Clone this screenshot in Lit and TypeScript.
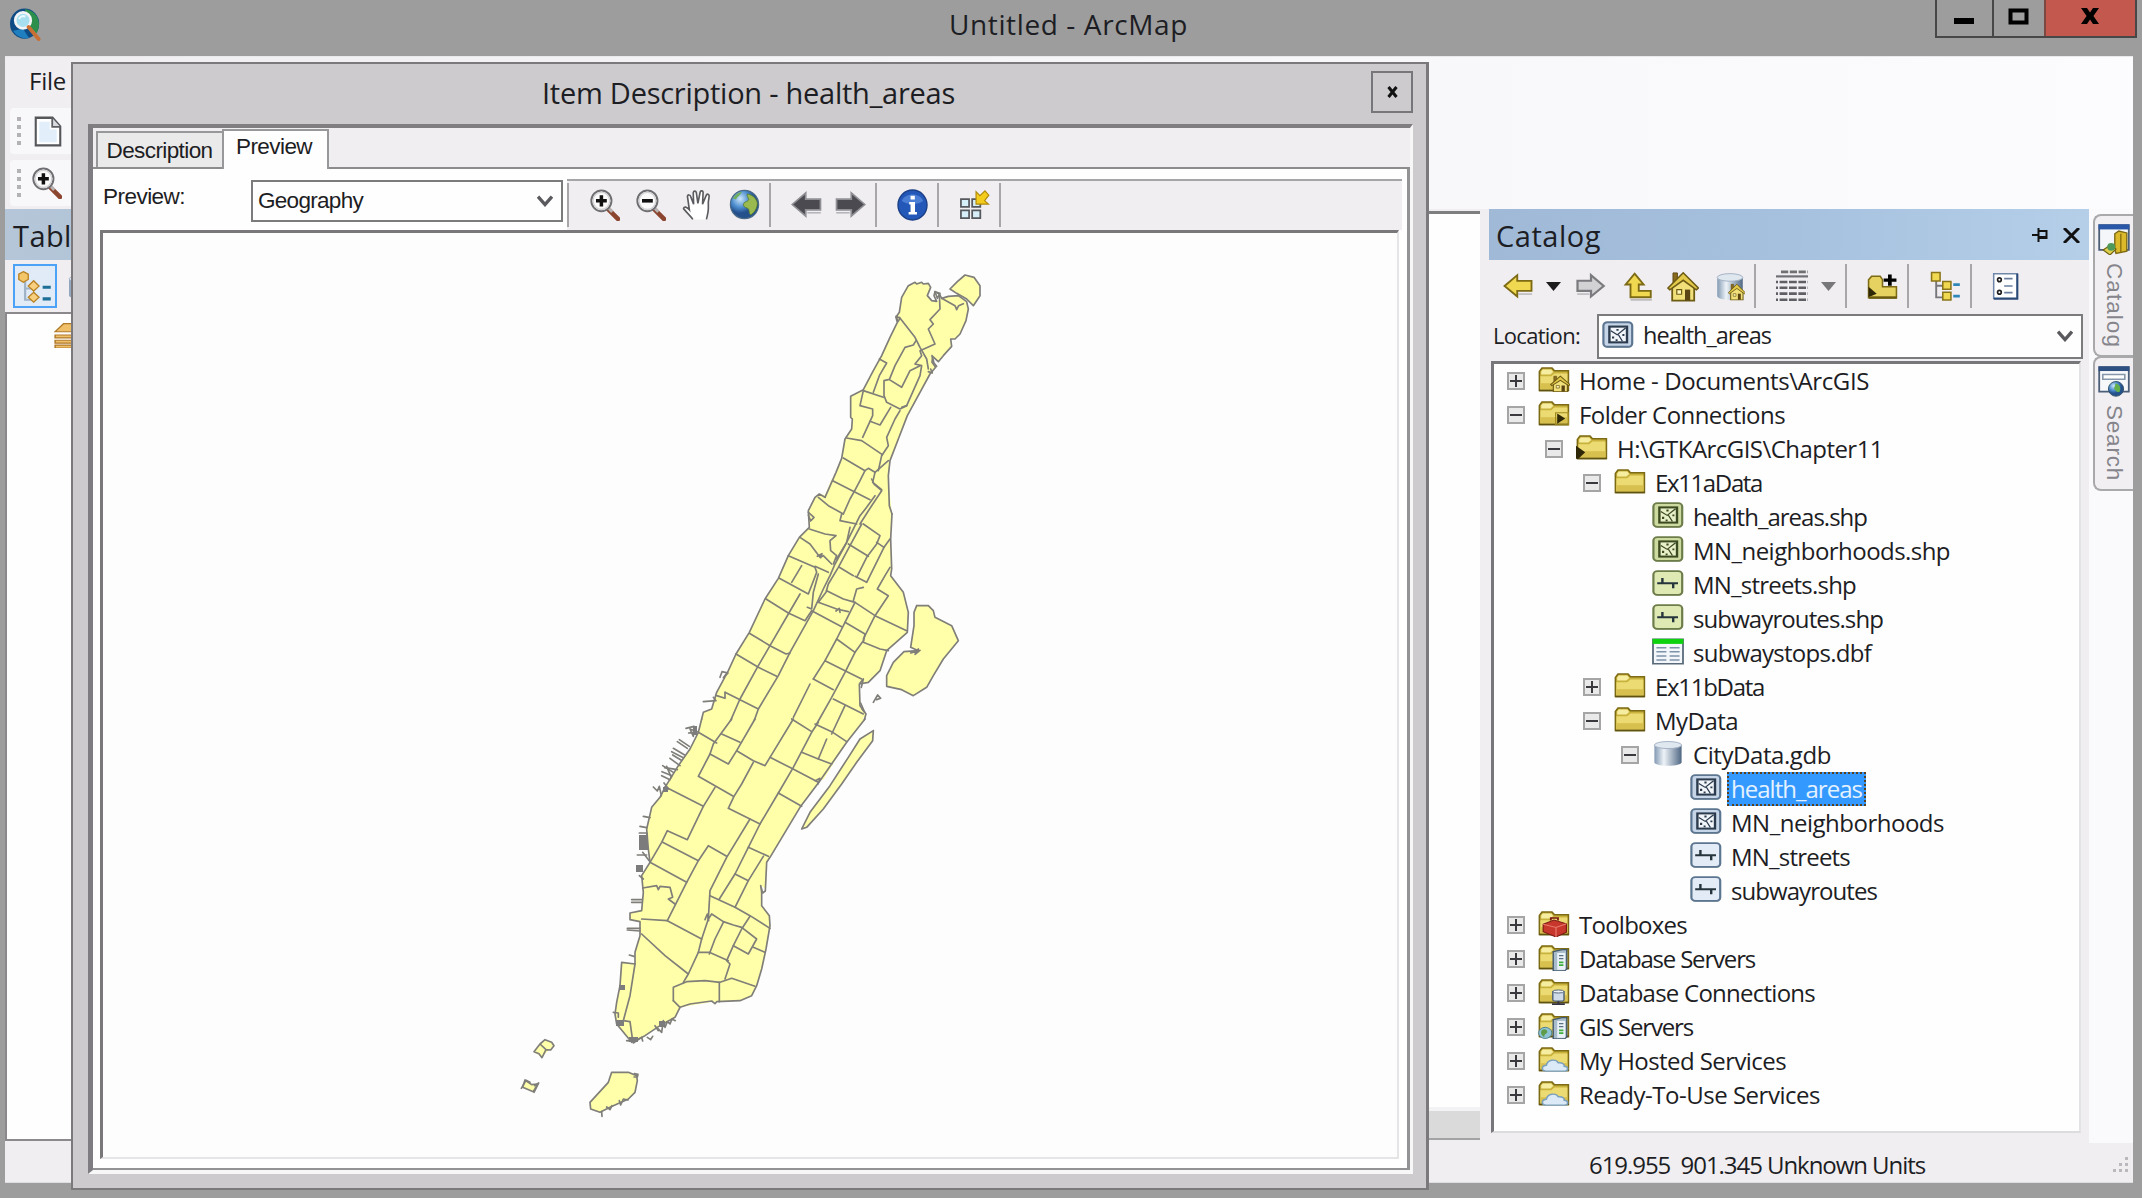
import { LitElement, html, svg, css, nothing, type TemplateResult } from "lit";
import { customElement, property } from "lit/decorators.js";

const UI_FONT = '"Open Sans", "Noto Sans", sans-serif';
const CLASSIC_FONT = '"Liberation Sans", sans-serif';

const pen = document.createElement("canvas").getContext("2d")!;

/* Text that is tracked so that it occupies a known width. */
@customElement("fit-label")
class FitLabel extends LitElement {
  @property() text = "";
  @property({ type: Number }) width = 0;
  @property({ type: Number }) size = 24;
  @property({ type: Boolean }) classic = false;

  static styles = css`
    :host { display: inline-block; white-space: pre; flex: none; line-height: 1; }
    .t { display: block; line-height: 1.36; }
  `;

  render() {
    const family = this.classic ? CLASSIC_FONT : UI_FONT;
    pen.font = `${this.size}px ${family}`;
    const natural = pen.measureText(this.text).width;
    const tracking = this.width ? (this.width - natural) / this.text.length : 0;
    return html`<span class="t" style="font-family:${family};font-size:${this.size}px;letter-spacing:${tracking.toFixed(3)}px">${this.text}</span>`;
  }
}

const label = (text: string, width: number, size = 24, classic = false) =>
  html`<fit-label .text=${text} .width=${width} .size=${size} .classic=${classic}></fit-label>`;

/* ---------- icons, all on a 16 x 16 grid ---------- */

const folder = svg`
  <path d="M.7 14.5V3.2L2 1.2h5l1.2 1.6h7V14.5z" fill="#c9b23c" stroke="#7d6a14" stroke-width=".8"/>
  <path d="M1.6 3.3 2.4 2h4.2l1 1.5-1.4 1.6H1.6z" fill="#f6eda0"/>
  <path d="M1.2 6h5.4l1.6-1.6h6.5v9.6H1.2z" fill="#ecdb72"/>
  <path d="M1.2 10.2h13.5V14H1.2z" fill="#d8c04e"/>
  <path d="M.6 14.5h14.8" stroke="#5f5110" stroke-width="1"/>`;

const server = svg`
  <path d="M7 4.2 11.5 3h2.3v11.5L12.7 15.6H7z" fill="#a9bccb" stroke="#42586b" stroke-width=".7"/>
  <path d="M9 5h4v10H9z" fill="#eaf1f7"/>
  <path d="M9.9 6.6h2.2M9.9 8.4h2.2" stroke="#5a6f82" stroke-width=".8"/>
  <path d="M9.9 10.6h2.2M9.9 12.2h2.2" stroke="#3fae3f" stroke-width="1"/>`;

const house = svg`
  <path d="M2.6 7.6V15.3h11V7.6L8.2 2z" fill="#f1e07a" stroke="#6d5b14" stroke-width=".9"/>
  <path d="M3 1h2.2v4L3 6.8z" fill="#8a6a1c" stroke="#5d4a10" stroke-width=".5"/>
  <path d="M.5 8.8 8.1.9l7.6 7.9-1 .9-6.6-4.9-6.7 4.9z" fill="#e3c94a" stroke="#6d5b14" stroke-width=".8"/>
  <path d="M4.9 9.6h2.4V12H4.9z" fill="#fff6bc" stroke="#6d5b14" stroke-width=".6"/>
  <path d="M9 9.6h2.6v5.6H9z" fill="#5b4413"/>`;

const cylinder = svg`
  <path d="M1.2 3v10.2c0 1.2 3 2.1 6.8 2.1s6.8-.9 6.8-2.1V3z" fill="url(#steel)"/>
  <ellipse cx="8" cy="3" rx="6.8" ry="2.1" fill="#dfe7ef" stroke="#9fb0c2" stroke-width=".5"/>`;

const lens = (sign: TemplateResult) => svg`
  <path d="M9.6 9.8 15 15" stroke="#8c4630" stroke-width="2.3" stroke-linecap="round"/>
  <path d="M10.2 9.6 12 11.4" stroke="#b9b3b3" stroke-width="1.6"/>
  <circle cx="6.4" cy="5.9" r="5.2" fill="#fafafa" stroke="#6f6f73" stroke-width="1"/>
  <circle cx="6.4" cy="5.9" r="4.3" fill="none" stroke="#d3d3d6" stroke-width=".7"/>${sign}`;

const tile = (edge: string, fill: string, mark: TemplateResult) => svg`
  <rect x=".8" y="1.4" width="14.6" height="14" rx="2.2" fill="#8a8f88" opacity=".55"/>
  <rect x=".7" y=".7" width="14.4" height="14" rx="2" fill=${fill} stroke=${edge} stroke-width="1.1"/>${mark}`;

const areaMark = (ink: string, paper: string) => svg`
  <rect x="3.7" y="3.2" width="8.8" height="9" fill=${paper} stroke=${ink} stroke-width="1.2"/>
  <path d="M4.4 5.600 7.600 7.900 11.800 4M8.200 7.800 10.200 11.600" fill="none" stroke=${ink} stroke-width=".65"/>
  <path d="M7.200 4.500h1.100v1.100H7.200zM5 8.800h1.100v1.200H5zM10.200 7.400h1v1.100h-1zM6.800 10.400h1v1h-1z" fill=${ink}/>`;

const lineMark = svg`<path d="M2.6 7.8H13M5.2 4.8v3M10.6 7.8v3" stroke="#26343c" stroke-width="1.2" fill="none"/>`;

const cloud = svg`<path d="M4 14.9C1.5 14.7 1.600 11.600 4.200 11.400 4.600 8.200 8.800 7.200 10.200 10c2.200-.3 3.100 1 2.900 2 2.400.3 2.200 2.800.2 2.900z" fill="#dbeaf6" stroke="#7c9fbc" stroke-width=".8"/>`;

const treeGlyph = svg`
  <path d="M3.200 4v9.600h6M3.200 7.600h6" fill="none" stroke="#77777b" stroke-width="1"/>
  <path d="M.8.8h4.4v4.4H.8zM6.6 5.4h4.2v4H6.600zM6.600 11h4.200v4H6.600z" fill="#f0d850" stroke="#8a741a" stroke-width=".8"/>
  <path d="M12 7h3.400M12 13h3.400" stroke="#2e86b8" stroke-width="1.400"/>`;

const ICONS: Record<string, TemplateResult> = {
  arcmap: svg`
    <circle cx="7.8" cy="7.6" r="7.3" fill="#0f4c86"/>
    <path d="M8 .6C12 1 15 4 15 8c0 2-1 4.4-2.6 5.6L9.5 9z" fill="#2c8f4c"/>
    <path d="M2 11c2 3 5 4 8 3.6L7 10z" fill="#1f7fbf"/>
    <circle cx="7" cy="6" r="3.9" fill="#a8dff0" stroke="#f2f4f5" stroke-width="1.3"/>
    <path d="M5 5.4C5.6 4 7 3.6 8.2 4.2" stroke="#e9fbff" stroke-width="1" fill="none"/>
    <path d="M9.8 9.2 14.8 15" stroke="#c96f34" stroke-width="1.9" stroke-linecap="round"/>`,
  page: svg`<path d="M1 .9h9.6L15 5.4v9.8H1z" fill="#fff" stroke="#55575b" stroke-width="1.2"/>
    <path d="M3 3h6v4h4v6.5H3z" fill="#e2effa"/><path d="M10.4 1v4.6H15" fill="#d8dade" stroke="#5d5f63" stroke-width="1"/>`,
  zoomIn: lens(svg`<path d="M3.6 5.9h5.6M6.4 3.1v5.6" stroke="#111" stroke-width="1.8"/>`),
  zoomOut: lens(svg`<path d="M3.6 5.9h5.6" stroke="#111" stroke-width="1.8"/>`),
  hand: svg`<path d="M5.600 15.200C4.600 13.600 2.600 12 .8 9.800c.2-1.200 1.600-1 3 .6L2.800 3.600c.2-.9 1.400-.8 1.700.2L6 7.600 5.800 1.800c.2-1 1.400-1 1.600 0l.8 5.400L9.400 1.400c.4-.8 1.500-.6 1.500.4L10.600 7.600l2-4.600c.6-.8 1.600-.2 1.400.8-.6 2.400-.6 3.800-.4 6 0 2-.6 3.600-1 5.400" fill="#fff" stroke="#5c5c60" stroke-width=".85"/>`,
  globe: svg`<circle cx="8" cy="8" r="7.300" fill="url(#sea)" stroke="#4a6a86" stroke-width=".6"/>
    <path d="M9.400 2.600c2 .2 4.400 1.600 5.200 4.400.2 3-1.800 5.400-3.400 6.400-1.200-1-.4-2.400-1.400-3.400-1.400-.4-2.800-1-2.200-2.600.8-1 2.200-.8 2.600-2C10 4.400 9 3.600 9.400 2.600z" fill="#9ab94e" stroke="#55792a" stroke-width=".4"/>
    <path d="M2 4.800C3.400 2.800 5 1.600 6.600 1.400 6 3.200 4.400 3.600 3.600 5.400z" fill="#6fae5a"/>`,
  prev: svg`<path d="M.6 8 7.600 1.600V5h7.600v6H7.600v3.400z" fill="#4a4a50" stroke="#8f8f94" stroke-width=".9"/><path d="M8.400 12.600h7" stroke="#a9a9ae" stroke-width=".7"/>`,
  next: svg`<path d="M15.400 8 8.400 1.600V5H.8v6h7.600v3.400z" fill="#4a4a50" stroke="#8f8f94" stroke-width=".9"/><path d="M.6 12.600h7" stroke="#a9a9ae" stroke-width=".7"/>`,
  info: svg`<circle cx="8" cy="8" r="7.500" fill="#2458b8" stroke="#1b3f86" stroke-width=".7"/><path d="M2.500 6C4 1.600 12 1.600 13.500 6 11 8 5 8 2.500 6z" fill="#5b8ee0" opacity=".7"/>
    <path d="M7 3.400h2.200v1.900H7zM6.300 6.500h3v5h1v1.300H6v-1.300h1V7.800h-.7z" fill="#fff"/>`,
  layout: svg`<path d="M1 5.200h4.200v4H1zM6.800 5.200H11v4H6.800zM1 11h4.200v4H1zM6.800 11H11v4H6.800z" fill="#d6eef8" stroke="#55585c" stroke-width=".9"/>
    <path d="M8.800 1.400v6.400h6.400L13.200 6l2.200-2.800L13.400 1l-2.600 2.400z" fill="#f4cc1c" stroke="#b08a08" stroke-width=".6"/>`,
  back: svg`<path d="M.8 8 7.600 1.800V5h7.600v5.800H7.600V14z" fill="#f0d850" stroke="#7d6a14" stroke-width="1"/><path d="M8 12.600h7.500" stroke="#b5b3b5" stroke-width=".8"/>`,
  forward: svg`<path d="M14.800 8 8 1.800V5H.8v5.800H8V14z" fill="#d2d2d4" stroke="#7b7b7f" stroke-width="1.200"/><path d="M.6 12.600h6.500" stroke="#b5b3b5" stroke-width=".8"/>`,
  up: svg`<path d="M6.200 1.400 11 7.200H8.400v3.400h6.400V14H4V7.200H1.400z" fill="#f0d850" stroke="#7d6a14" stroke-width="1"/><path d="M4 15.400h11.400" stroke="#b5b3b5" stroke-width=".8"/>`,
  home: house,
  homeDb: svg`${cylinder}<g transform="translate(6.800 6.200) scale(.6)">${house}</g>`,
  grid: svg`<path d="M2.500.9h13.500" stroke="#707074" stroke-width="1.400" stroke-dasharray="3.600 .8"/><path d="M0 3.200h16" stroke="#707074" stroke-width="1.100"/>
    <path d="M0 6h16M0 8.900h16M0 11.800h16M0 14.900h16" stroke="#5f5f63" stroke-width="1.300" stroke-dasharray="1 .8 3.900 .8 3.900 .8 3.800 .8"/>`,
  folderAdd: svg`<path d="M.8 14.800V4.400L2.400 2.400h4.400L8 4.400v4h7.200v6.400z" fill="#e6d260" stroke="#7d6a14" stroke-width=".8"/><path d="M.8 8.400 5 12.400.8 14.400z" fill="#2e2708"/><path d="M1 14.600h14.400" stroke="#6a5a10" stroke-width="1.400"/>
    <path d="M11.800 1.400v6.400M8.600 4.600h6.600" stroke="#000" stroke-width="1.900"/>`,
  tree: treeGlyph,
  toc: svg`<path d="M3.600 5v9.400h4M3.600 9h4" fill="none" stroke="#9fb4c8" stroke-width="1"/>
    <path d="M2.800.8 5 2v2.600L2.800 6 .8 4.600V2z" fill="#f3c66a" stroke="#b98325" stroke-width=".6"/>
    <path d="M7.400 5.200 9.800 7.800 7.400 10.200 5 7.800zM7.400 10.800l2.400 2.400-2.400 2.400L5 13.200z" fill="#f8cf7e" stroke="#b98325" stroke-width=".6"/>
    <path d="M11.400 8.400h3.600M11.400 14h3.600" stroke="#1e6f98" stroke-width="1.500"/>`,
  list: svg`<path d="M1 1h14v14H1z" fill="#fff" stroke="#6f88aa" stroke-width=".9"/><path d="M15 1v14.300H1" fill="none" stroke="#2b4a77" stroke-width="1.200"/>
    <circle cx="4.400" cy="4.400" r="1.100" fill="none" stroke="#222"/><circle cx="4.400" cy="11.600" r="1.100" fill="none" stroke="#222"/>
    <path d="M7.200 3.800h5M7.200 8h5M7.200 11.800h5" stroke="#6a7fa0" stroke-width=".9"/>`,
  folder,
  folderHome: svg`${folder}<g transform="translate(6 5.400) scale(.64)">${house}</g>`,
  folderLink: svg`${folder}<path d="M9.600 8v6l4-3z" fill="#2e2708"/><path d="M8.800 7.600h6.400v7H8.800z" fill="none" stroke="#a08a20" stroke-width=".6"/>`,
  folderOpen: svg`${folder}<path d="M0 7v7.600h1.200L4.600 10.800z" fill="#2e2708"/>`,
  toolbox: svg`${folder}<path d="M2.600 8.400 8 6l6.200 2.200v5L9 16l-6.400-3.200z" fill="#c8372c" stroke="#7c1a14" stroke-width=".6"/><path d="M2.600 8.400 9 10.400l5.200-2.200M9 10.400V16" stroke="#e87a6c" stroke-width=".6" fill="none"/><path d="M6.400 6.200V4.800h3.600v1.400" fill="none" stroke="#7c1a14" stroke-width=".9"/>`,
  dbServer: svg`${folder}<g transform="translate(.6 .3)">${server}</g>`,
  dbConn: svg`${folder}<path d="M7.400 8v5c0 1 5.600 1 5.600 0V8z" fill="#cfdbe8" stroke="#4c6076" stroke-width=".7"/><ellipse cx="10.200" cy="8" rx="2.800" ry=".9" fill="#eef3f8" stroke="#4c6076" stroke-width=".5"/><path d="M10.200 13.800v1.400M7 15.500h6.400" stroke="#334" stroke-width="1"/>`,
  gisServer: svg`${folder}<g transform="translate(.6 .3)">${server}</g><circle cx="3.600" cy="12.400" r="3.300" fill="#8fc4d6" stroke="#4b7d8c" stroke-width=".5"/><path d="M2 10.600c1.400-1 3 0 2.600 1.600-.6 1-1.600 1-1.400 2.600C1.600 13.800 1 12 2 10.600z" fill="#5e9c4a"/>`,
  cloudFolder: svg`${folder}${cloud}`,
  shpArea: tile("#6d7d4a", "#cddaa0", areaMark("#3c4a22", "#e8f0c8")),
  shpLine: tile("#6d7d4a", "#dfe9b4", lineMark),
  gdbArea: tile("#5c7590", "#c6d6e8", areaMark("#2c3c4e", "#f2f6fa")),
  gdbLine: tile("#5c7590", "#e2ebf6", lineMark),
  dbf: svg`<path d="M.5.800h15v14.400H.5z" fill="#f4f7fa" stroke="#5a6a7a" stroke-width=".9"/><path d="M.3.500h15.400v3H.3z" fill="#0ed20e"/>
    <path d="M2.200 5.800h5M2.200 8.200h5M2.200 10.600h5M2.200 13h5M8.800 5.800h5M8.800 8.200h5M8.800 10.600h5M8.800 13h5" stroke="#7d93aa" stroke-width=".9"/>`,
  gdb: cylinder,
  layers: svg`<path d="M5 1h14l-4 5H1zM1 8h14v1.800H1zM1 11.200h14V13H1zM1 14.200h14V16H1z" fill="#f0c068" stroke="#b0792a" stroke-width=".7"/>`,
  tabCatalog: svg`<path d="M.6.600h14.800v12.800H.6z" fill="#f4f6f9" stroke="#4c5e78" stroke-width=".9"/><path d="M.3.200h15.400v2.600H.3z" fill="#2b57a8"/>
    <path d="M8.400 5 10.400 3.600 14.400 4.600V14L9 15.200 8.400 13z" fill="#dcb92a" stroke="#7d6a14" stroke-width=".7"/><path d="M11.400 5v9.600" stroke="#8d7410" stroke-width=".7"/>
    <path d="M2.600 13.400 6 11l3 2-3 3z" fill="#e3cf4e" stroke="#6e6414" stroke-width=".6"/><circle cx="6.600" cy="11.800" r="2" fill="#4f9a5a"/>`,
  tabSearch: svg`<path d="M.6.600h14.800v12.600H.6z" fill="#f6f8fa" stroke="#4c5e78" stroke-width=".9"/><path d="M.3.200h15.400v2.400H.3z" fill="#2e4f82"/><path d="M2.400 4.400h11v2.400h-11z" fill="#fff" stroke="#8797ab" stroke-width=".8"/>
    <circle cx="9" cy="11.800" r="3.800" fill="url(#sea)" stroke="#35566f" stroke-width=".5"/><path d="M8.600 9c2 0 3 2 2.400 4-1.400 1.400-2-.4-3-1.400.2-1 .8-1.400.6-2.600z" fill="#62b04a"/>`,
};

const icon = (name: string, w = 31, h = 31) => html`
  <svg class="icon" width=${w} height=${h} viewBox="0 0 16 16" preserveAspectRatio="none">
    <defs>
      <linearGradient id="steel"><stop offset="0" stop-color="#8299b3"/><stop offset=".35" stop-color="#eef3f8"/><stop offset="1" stop-color="#4f6784"/></linearGradient>
      <radialGradient id="sea" cx=".35" cy=".3"><stop offset="0" stop-color="#cfe8fa"/><stop offset=".6" stop-color="#4f8fd0"/><stop offset="1" stop-color="#24508c"/></radialGradient>
    </defs>${ICONS[name]}
  </svg>`;

const chevron = html`<svg class="chev" width="16" height="12" viewBox="0 0 16 12"><path d="M1 1.500 8 9.500 15 1.500" fill="none" stroke="#5a5a5e" stroke-width="3.400"/></svg>`;
const caret = (fill: string) => html`<svg class="caret" width="15" height="9" viewBox="0 0 15 9"><path d="M0 0h15L7.500 9z" fill=${fill}/></svg>`;

/* ---------- map geometry: four survey sheets at triple scale ---------- */

type Sheet = { x: number; y: number; areas: string[]; lines: string[] };

const SHEETS: Sheet[] = [
  {
    x: 820, y: 260,
    areas: [
      "0,705 15,715 48,640 65,598 75,540 95,510 97,480 92,475 92,412 130,392 160,335 185,290 210,235 232,190 228,175 238,160 245,115 265,80 285,70 325,73 332,85 322,110 335,125 350,127 365,118 385,112 415,110 440,128 445,150 438,185 420,225 405,240 392,240 395,262 370,290 355,308 338,292 336,310 347,325 330,345 300,400 262,470 235,540 210,605 205,650 208,740 216,765 216,812 0,812",
      "390,90 412,68 435,48 462,55 480,80 480,110 460,140 440,120 410,103",
    ],
    lines: [
      "15,715 48,640 65,598 75,540 95,510 97,480 92,475 92,412 130,392 160,335 185,290 210,235 232,190 228,175 238,160 245,115 265,80 285,70 290,75 305,70 310,75 325,73 332,85 322,110 335,125 350,127 342,110 345,98 358,105 365,118 385,112 415,110 440,128 445,150 438,185 420,225 405,240 392,240 395,262 370,290 355,308 338,292 336,310 347,325 330,345 300,400 262,470 235,540 210,605 205,650 208,740 216,765",
      "390,90 412,68 435,48 462,55 480,80 480,110 460,140 440,120 410,103 390,90",
      "345,98 360,103 352,118 345,98", "336,290 342,312 350,322", "228,172 240,178 234,188 228,172", "325,338 337,342 332,330",
      "238,175 285,235 300,265 320,300 325,330", "358,105 360,150 330,182 340,195 325,210 345,255 300,275 305,290 285,315 305,320 300,350 280,395 260,440 245,445",
      "365,118 405,140 410,152 416,140 430,134", "288,245 280,258 255,265 225,320 208,362 245,385 270,335 300,320",
      "178,300 200,312 178,350 160,400", "205,362 192,365 192,410 200,430 240,450 260,440", "130,395 190,415",
      "130,395 120,440 158,450 158,470 150,487 128,535", "150,487 180,498 212,445", "240,455 225,480 200,535 205,560 185,590 175,635",
      "80,537 125,545 187,587", "70,597 135,635 145,628 165,640 158,670 185,692", "205,605 165,640",
      "38,665 100,697 150,722", "135,635 120,665 103,697",
    ],
  },
  {
    x: 700, y: 480,
    areas: [
      "395,0 375,48 358,45 345,55 325,95 328,145 298,175 265,230 235,298 195,360 148,460 108,525 85,575 50,640 35,690 10,700 0,730 0,902 370,902 440,790 498,705 480,680 478,615 505,610 540,575 560,515 622,460 625,400 610,340 572,290 575,270 572,180 575,100 565,0",
      "650,380 685,380 700,395 705,415 755,440 775,485 730,540 700,590 680,625 640,650 605,632 560,622 560,590 580,550 612,518 655,515 632,505 642,440 642,400",
    ],
    lines: [
      "375,55 358,45 345,55 325,95 328,145 298,175 265,230 235,298 195,360 148,460 108,525 85,575 50,640 35,690 10,700 5,720",
      "576,105 572,180 575,270 572,290 610,340 625,400 622,460 560,515 540,575 505,610 478,615 480,680 498,705 493,722",
      "650,380 685,380 700,395 705,415 755,440 775,485 730,540 700,590 680,625 640,650 605,632 560,622 560,590 580,550 612,518 655,515 632,505 642,440 642,400 650,380",
      "632,522 660,514 645,526 655,510", "520,670 533,648 542,658 530,662", "325,100 342,115 332,126 325,108", "480,612 490,600 484,625", "482,672 494,700 486,690",
      "463,37 450,60 430,105", "515,0 522,15 545,35 515,80 480,135", "525,50 500,85 480,110 440,190 405,255 390,290 370,330 340,395 270,520 235,590 175,690 163,724",
      "355,55 385,80 430,105", "425,105 420,125 470,135", "328,150 375,165 408,170 390,185 392,215 410,230 400,255", "300,175 330,195 360,235 370,230 395,255", "352,232 366,224 362,236",
      "450,145 440,190 410,240", "485,135 450,200 415,265 385,315 378,340 355,370", "490,135 540,170 530,195 500,235 470,295", "445,195 505,232",
      "570,180 552,205 530,190", "552,205 500,310 465,292", "418,265 460,290", "570,265 555,290 532,330 565,350 525,410 490,480",
      "380,335 430,360 465,370 525,410 620,455", "490,325 470,330 460,365", "355,370 410,390 445,398", "408,396 418,388 420,400", "465,370 435,430 410,480 375,545 340,600",
      "335,395 425,443", "435,430 495,465 490,490 540,510 565,515", "410,480 465,520 490,485", "375,545 435,575 485,600",
      "465,520 435,580 395,655 350,735", "340,600 400,632", "400,660 490,705", "330,615 280,715",
      "435,680 395,765",
      "265,230 345,265 350,280 325,345 238,298", "305,260 275,310", "345,262 385,280", "355,285 340,340 335,390 322,385",
      "198,360 265,402 315,425 335,395", "300,345 265,405 210,500 172,565 120,660 92,724", "148,463 210,500 258,525 270,522",
      "108,525 175,565 230,592", "75,640 120,662 175,690", "50,650 75,658 75,640", "10,668 48,665 40,655", "60,595 66,578 84,582 70,596 78,586",
    ],
  },
  {
    x: 590, y: 720,
    areas: [
      "335,0 325,40 300,90 265,140 225,205 210,235 185,265 170,330 175,390 180,430 155,470 160,520 155,575 120,582 120,602 150,608 150,650 135,700 135,735 95,730 90,800 80,850 75,885 80,915 125,970 165,950 210,920 255,895 270,865 370,848 450,845 485,830 500,800 515,750 528,690 540,620 538,590 515,560 512,500 528,510 530,430 540,415 630,265 690,185 770,70 825,0",
      "850,35 848,65 800,130 755,195 700,270 650,325 635,330 660,280 720,200 775,115 810,60",
    ],
    lines: [
      "335,0 325,40 300,90 265,140 225,205 210,235 185,265 170,330 175,390 180,430 155,470 160,520 155,575 120,582 120,602 150,608 150,650 135,700 135,735 95,730 90,800 80,850 75,885 80,915 125,970 165,950 210,920 255,895 270,865 300,855 365,846 375,854 380,848 450,845 485,830 500,800 515,750 528,690 540,620 538,590 515,560 515,520 512,500 518,522 526,516 530,430 540,415 630,265 690,185 770,70 825,0",
      "850,35 848,65 800,130 755,195 700,270 650,325 635,330 660,280 720,200 775,115 810,60 850,35",
      "325,40 380,72", "425,0 370,75 360,105 325,172 375,200 430,232", "395,45 450,70", "495,0 440,95 415,135 360,105", "440,95 490,125 525,140 540,115 610,0",
      "490,130 455,195 432,232 415,268 510,315", "540,115 605,148 685,190", "605,0 665,38", "685,10 665,40 610,145 565,222 510,315 475,385 435,465 388,540",
      "675,15 725,38 770,68", "710,60 685,120", "635,100 685,120 725,135", "565,222 635,262", "480,300 410,415 360,515 355,600 335,660 325,700 295,765 280,790",
      "475,385 535,412", "520,412 475,485 435,565", "435,465 475,485", "360,530 435,565 480,590 540,628", "410,412 355,380 325,425 290,490 232,605", "218,370 325,425",
      "180,430 290,490", "180,430 215,370 232,335 292,362 340,262 375,205", "228,205 340,262", "158,507 200,500 205,512 210,502 240,505 248,535 235,540 255,555",
      "155,600 232,605 335,660", "155,645 225,710 295,765", "355,600 365,585 400,608 430,618 455,625 500,660 475,705 430,680", "400,610 375,660 358,705",
      "480,592 455,630 430,680 410,725 420,735 405,780", "325,700 358,700 415,725", "490,685 525,700", "250,845 250,805 290,788 345,785 390,790 425,778 495,802", "250,845 270,865",
      "388,790 388,848", "135,735 120,830 100,905 120,908 128,965", "345,602 352,585 356,605", "676,185 690,178 684,195",
      /* Hudson piers */
      "288,28 312,22 310,52 300,30 322,38 296,42", "262,68 292,88", "268,62 298,82", "250,88 284,108", "245,98 280,116", "248,108 274,124", "240,118 270,140",
      "218,140 250,160", "224,146 262,152", "216,158 246,170", "230,142 244,176", "215,170 240,182", "222,192 236,210 224,204", "190,204 202,216 208,202 214,230",
      "160,292 180,296", "150,322 170,326", "148,342 170,342 172,350", "142,408 170,408", "158,400 180,428", "148,470 160,480",
      "125,542 155,542", "125,550 155,550", "112,628 150,628", "112,633 150,636", "118,708 132,712",
      "195,920 205,935 200,925 215,940 220,905 225,925 232,908 240,915 246,900 256,905", "172,955 182,962 188,952", "70,880 85,882 85,895", "110,965 135,968 130,972 155,955 158,966",
    ],
  },
  {
    x: 500, y: 920,
    areas: [
      "335,460 385,460 410,470 412,485 405,520 385,540 330,565 300,580 272,570 270,550 325,490",
      "120,375 135,362 155,370 160,380 145,395 125,415 102,398",
      "75,483 95,497 113,495 100,518 68,505",
    ],
    lines: [
      "335,460 385,460 410,470 412,485 405,520 385,540 330,565 300,580 272,570 270,550 325,490 335,460",
      "120,375 135,362 155,370 162,380 152,393 138,392 126,416 117,404 102,398 120,375 138,392",
      "75,483 95,497 113,495 100,518 68,505 75,483", "64,508 78,484 90,490", "104,500 116,492 102,520",
      "403,464 414,466 412,474 402,474", "305,578 306,592", "320,564 330,572 336,560", "358,545 362,558 370,540 384,543",
    ],
  },
];

/* Solid pier blocks along the western shore. */
const BLOCKS: [number, number, number, number][] = [
  [639, 836, 9, 15], [636, 866, 7, 7], [619, 986, 6, 5], [616, 1021, 8, 6], [629, 1038, 9, 5], [693, 727, 4, 9], [663, 788, 5, 5], [659, 1022, 6, 6],
];

/* ---------- catalog contents ---------- */

type Row = [depth: number, mark: "+" | "-" | "", icon: string, text: string, width: number];

const ROWS: Row[] = [
  [0, "+", "folderHome", "Home - Documents\\ArcGIS", 290],
  [0, "-", "folderLink", "Folder Connections", 206],
  [1, "-", "folderOpen", "H:\\GTKArcGIS\\Chapter11", 266],
  [2, "-", "folder", "Ex11aData", 107],
  [3, "", "shpArea", "health_areas.shp", 174],
  [3, "", "shpArea", "MN_neighborhoods.shp", 257],
  [3, "", "shpLine", "MN_streets.shp", 163],
  [3, "", "shpLine", "subwayroutes.shp", 190],
  [3, "", "dbf", "subwaystops.dbf", 178],
  [2, "+", "folder", "Ex11bData", 109],
  [2, "-", "folder", "MyData", 83],
  [3, "-", "gdb", "CityData.gdb", 138],
  [4, "", "gdbArea", "health_areas", 131],
  [4, "", "gdbArea", "MN_neighborhoods", 213],
  [4, "", "gdbLine", "MN_streets", 119],
  [4, "", "gdbLine", "subwayroutes", 146],
  [0, "+", "toolbox", "Toolboxes", 108],
  [0, "+", "dbServer", "Database Servers", 176],
  [0, "+", "dbConn", "Database Connections", 236],
  [0, "+", "gisServer", "GIS Servers", 114],
  [0, "+", "cloudFolder", "My Hosted Services", 207],
  [0, "+", "cloudFolder", "Ready-To-Use Services", 241],
];
const SELECTED = 12;

@customElement("app-root")
class AppRoot extends LitElement {
  static styles = css`
    * { box-sizing: border-box; }
    :host { display: block; position: relative; width: 2142px; height: 1198px; overflow: hidden; background: #9d9d9d; color: #1d1d24; }
    .icon, .chev, .caret { display: block; flex: none; }
    .frame { height: 1198px; display: flex; flex-direction: column; }

    .titlebar { height: 56px; display: grid; grid-template-columns: 940px 1fr 207px; align-items: start; padding-left: 9px; }
    .titlebar .logo { padding-top: 8px; }
    .titlebar .name { padding-top: 5px; }
    .winbtns { display: flex; height: 38px; border: 2px solid #474747; border-top: 0; width: 202px; }
    .winbtns > div { display: flex; align-items: center; justify-content: center; padding-bottom: 4px; border-left: 2px solid #474747; }
    .winbtns .min { width: 55px; border-left: 0; padding-right: 2px; }
    .winbtns .max { width: 52px; padding-right: 1px; }
    .winbtns .cls { flex: 1; background: #c2584e; border-left-color: #7d4742; padding-right: 1px; }

    .body { width: 2128px; margin-left: 5px; height: 1127px; display: flex; flex-direction: column; background: #f0eef1; }
    .bars { height: 153px; background: linear-gradient(90deg, #f0eef1, #f8f7fa 66%, #fcfbfd); padding: 6px 0 0 5px; border-top: 1px solid #e9e8ea; }
    .menu { height: 45px; padding: 2px 0 0 19px; }
    .bar { height: 46px; margin-bottom: 6px; width: 400px; border-radius: 4px; background: #f8f7f9; display: flex; align-items: center; padding-left: 7px; gap: 10px; }
    .bar.file { gap: 13px; }
    .grip { width: 4px; height: 29px; background: repeating-linear-gradient(#b4b2b6 0 4px, transparent 4px 8px); }

    .middle { height: 934px; display: flex; }
    .toc { width: 300px; display: flex; flex-direction: column; }
    .toc .head { height: 51px; background: linear-gradient(90deg, #b4c6d8, #adc0d5); padding: 7px 0 0 8px; }
    .toc .tools { height: 52px; padding: 4px 0 0 8px; display: flex; gap: 10px; }
    .toc .on { width: 44px; height: 44px; border: 2px solid #4ba2f6; background: #e0ebf7; display: flex; align-items: center; justify-content: center; }
    .toc .next { padding-top: 10px; }
    .toc .list { height: 829px; margin-left: 0; border: 2px solid #8b898c; background: #fefefe; padding: 8px 0 0 46px; }
    .canvas { flex: 1; display: flex; flex-direction: column; padding-top: 2px; }
    .canvas .paper { flex: 1; background: #fefefe; border-top: 3px solid #7e7d80; }
    .canvas .scroll { height: 33px; margin-bottom: 3px; background: #dadadb; border-top: 4px solid #f3f2f4; border-bottom: 2px solid #a3a2a4; }

    .catalog { width: 600px; margin-left: 9px; display: flex; flex-direction: column; }
    .catalog .head { height: 51px; background: linear-gradient(90deg, #9fb9d7, #a6c1de 50%, #b5cfe9); display: flex; align-items: center; padding: 3px 9px 0 7px; }
    .catalog .head .grow { flex: 1; }
    .catalog .head svg { margin: 0 0 2px 14px; }
    .catalog .tools { height: 51px; display: flex; align-items: center; padding: 1px 0 0 14px; }
    .g9 { width: 9px; } .g13 { width: 13px; } .g14 { width: 14px; } .g15 { width: 15px; } .g16 { width: 16px; } .g17 { width: 17px; } .g20 { width: 20px; } .g21 { width: 21px; }
    .vr { width: 2px; height: 44px; background: #a8a6a9; flex: none; }
    .location { height: 48px; display: flex; align-items: center; padding-left: 4px; }
    .location .cap { width: 104px; padding-top: 2px; }
    .select { border: 2px solid #7b7a7d; background: #fefefe; display: flex; align-items: center; }
    .location .select { width: 486px; height: 45px; margin-top: 2px; gap: 9px; padding: 0 8px 0 3px; }
    .location .icon { margin-bottom: 2px; }
    .select .grow { flex: 1; }
    .tree { margin: 2px 8px 0 2px; height: 772px; background: #fefefe; border: 2px solid #dcdbdd; border-left: 3px solid #77767a; border-top: 3px solid #77767a; border-right-color: #e3e2e4; padding-left: 13px; }
    .row { height: 34px; display: flex; align-items: center; }
    .exp { width: 18px; height: 18px; border: 2px solid #a5a5a5; background: #e9e9e9; display: flex; align-items: center; justify-content: center; flex: none; margin-right: 13px; }
    .exp.none { border: 0; background: none; }
    .row .icon { margin-right: 5px; margin-top: -3px; }
    .row .txt { height: 34px; padding: 1px 4px 0; display: flex; align-items: center; }
    .row .txt.sel { background: #3399ff; color: #e4f1ff; outline: 2px dotted #59401f; outline-offset: -2px; }

    .side { background: #fafafc; width: 44px; }
    .tabs { width: 40px; margin-left: 4px; padding-top: 5px; display: flex; flex-direction: column; }
    .vtab { border: 2px solid #a9a8ab; border-right: 0; border-radius: 8px 0 0 8px; background: #f1eff2; color: #85858b; display: flex; flex-direction: column; align-items: center; padding-top: 8px; gap: 8px; }
    .vtab.a { height: 143px; } .vtab.b { height: 135px; margin-top: -1px; }
    .vtab .v { writing-mode: vertical-rl; }

    .status { height: 40px; display: flex; align-items: center; padding: 6px 4px 0 1584px; border-bottom: 1px solid #dddcde; }
    .status .grow { flex: 1; }

    .dialog { position: absolute; left: 71px; top: 62px; width: 1358px; height: 1128px; background: #cdcbcd; border: 2px solid #7b797c; border-right-width: 3px; padding: 0 13px 14px 15px; display: flex; flex-direction: column; }
    .dtitle { height: 61px; display: flex; align-items: center; padding-left: 454px; }
    .dtitle .grow { flex: 1; }
    .dtitle fit-label { margin-top: -2px; }
    .dclose { width: 42px; height: 42px; border: 2px solid #77777b; display: flex; align-items: center; justify-content: center; margin: -4px 0 0 0; }
    .client { flex: 1; border-left: 5px solid #7e7c80; border-top: 4px solid #807e81; border-right: 3px solid #f7f7f8; border-bottom: 4px solid #f7f7f8; background: #f0eef1; display: flex; flex-direction: column; }
    .tabstrip { height: 41px; display: flex; align-items: flex-end; padding-left: 3px; border-bottom: 2px solid #8d8b8e; }
    .tab { display: flex; align-items: center; justify-content: center; border: 2px solid #98979a; border-bottom: 0; }
    .tab.off { width: 126px; height: 36px; background: #ebeaeb; border-right: 0; padding: 2px 1px 0 0; }
    .tab.on { width: 107px; height: 41px; background: #fefefe; margin-bottom: -3px; padding: 0 3px 6px 0; }
    .sheet { flex: 1; background: #fefefe; border-right: 3px solid #929194; border-bottom: 2px solid #929194; padding: 9px 8px 9px 7px; display: flex; flex-direction: column; }
    .controls { height: 52px; display: flex; }
    .controls .cap { width: 151px; padding: 4px 0 0 3px; }
    .controls .select { width: 312px; height: 42px; margin-top: 2px; padding: 1px 8px 1px 5px; }
    .strip { flex: 1; margin: 1px -3px 0 4px; border-top: 2px solid #a5a4a7; background: #f0eef1; display: flex; align-items: center; padding-bottom: 2px; }
    .view { flex: 1; border-left: 3px solid #79777a; border-top: 3px solid #79777a; border-right: 2px solid #e5e4e6; border-bottom: 2px solid #e5e4e6; background: #fdfdfd; overflow: hidden; }
    .map { display: block; width: 1294px; height: 924px; }
    .land { fill: #ffffa9; }
    .edge { fill: none; stroke: #7f7e79; stroke-width: 5; stroke-linejoin: round; stroke-linecap: round; }
    .block { fill: #7c7c7c; }
  `;

  private map() {
    return html`<svg class="map" viewBox="103 234 1294 924">
      ${SHEETS.map((s) => svg`<g transform="translate(${s.x} ${s.y}) scale(.33333)">${s.areas.map((p) => svg`<polygon class="land" points=${p}/>`)}</g>`)}
      ${SHEETS.map((s) => svg`<g transform="translate(${s.x} ${s.y}) scale(.33333)">${s.lines.map((p) => svg`<polyline class="edge" points=${p}/>`)}</g>`)}
      ${BLOCKS.map(([x, y, w, h]) => svg`<rect class="block" x=${x} y=${y} width=${w} height=${h}/>`)}
    </svg>`;
  }

  private row([depth, mark, glyph, text, width]: Row, index: number) {
    return html`<div class="row" style="padding-left:${depth * 38}px">
      <span class="exp ${mark ? "" : "none"}">${mark
        ? html`<svg width="12" height="12" viewBox="0 0 12 12"><path d=${mark === "+" ? "M0 6h12M6 0v12" : "M0 6h12"} stroke="#3a3a3e" stroke-width="2"/></svg>`
        : nothing}</span>
      ${icon(glyph, 32, 27)}
      <span class="txt ${index === SELECTED ? "sel" : ""}">${label(text, width)}</span>
    </div>`;
  }

  private catalog() {
    return html`<section class="catalog">
      <div class="head">${label("Catalog", 105, 29)}<span class="grow"></span>
        <svg width="17" height="16" viewBox="0 0 17 16"><path d="M0 8h6M6.500 1v14M6.500 4h8v7h-8M6.500 10h9" fill="none" stroke="#111" stroke-width="2"/></svg>
        <svg width="17" height="15" viewBox="0 0 17 15"><path d="M1 0 16 15M16 0 1 15" stroke="#111" stroke-width="3"/></svg>
      </div>
      <div class="tools">
        ${icon("back", 30, 28)}<i class="g13"></i>${caret("#1c1c1c")}<i class="g15"></i>${icon("forward", 30, 28)}<i class="g17"></i>
        ${icon("up", 30, 30)}<i class="g14"></i>${icon("home", 32, 31)}<i class="g16"></i>${icon("homeDb", 30, 29)}<i class="g9"></i><i class="vr"></i>
        <i class="g20"></i>${icon("grid", 32, 32)}<i class="g13"></i>${caret("#77777a")}<i class="g9"></i><i class="vr"></i>
        <i class="g20"></i>${icon("folderAdd", 31, 28)}<i class="g9"></i><i class="vr"></i>
        <i class="g21"></i>${icon("tree", 31, 31)}<i class="g9"></i><i class="vr"></i><i class="g20"></i>${icon("list", 27, 28)}
      </div>
      <div class="location"><span class="cap">${label("Location:", 87, 22)}</span>
        <div class="select">${icon("gdbArea", 32, 28)}${label("health_areas", 128, 23.500)}<span class="grow"></span>${chevron}</div>
      </div>
      <div class="tree">${ROWS.map((r, i) => this.row(r, i))}</div>
    </section>`;
  }

  private dialog() {
    return html`<section class="dialog">
      <div class="dtitle">${label("Item Description - health_areas", 413, 29)}<span class="grow"></span>
        <div class="dclose"><svg width="11" height="12" viewBox="0 0 11 12"><path d="M1.500 1l8 10M9.500 1l-8 10" stroke="#111" stroke-width="3"/></svg></div>
      </div>
      <div class="client">
        <div class="tabstrip"><div class="tab off">${label("Description", 106, 22.500, true)}</div><div class="tab on">${label("Preview", 76, 22.500, true)}</div></div>
        <div class="sheet">
          <div class="controls">
            <span class="cap">${label("Preview:", 82, 22.500, true)}</span>
            <div class="select">${label("Geography", 105, 22.500, true)}<span class="grow"></span>${chevron}</div>
            <div class="strip">
              <i class="vr"></i><i class="g20"></i>${icon("zoomIn", 31, 32)}<i class="g15"></i>${icon("zoomOut", 31, 32)}<i class="g16"></i>${icon("hand", 31, 32)}<i class="g16"></i>${icon("globe", 31, 31)}
              <i class="g9"></i><i class="vr"></i><i class="g20"></i>${icon("prev", 31, 29)}<i class="g13"></i>${icon("next", 31, 29)}<i class="g9"></i><i class="vr"></i>
              <i class="g20"></i>${icon("info", 31, 32)}<i class="g9"></i><i class="vr"></i><i class="g20"></i>${icon("layout", 31, 31)}<i class="g9"></i><i class="vr"></i>
            </div>
          </div>
          <div class="view">${this.map()}</div>
        </div>
      </div>
    </section>`;
  }

  render() {
    return html`
      <div class="frame">
        <header class="titlebar">
          <span class="logo">${icon("arcmap", 32, 33)}</span>
          <span class="name">${label("Untitled - ArcMap", 239, 28)}</span>
          <div class="winbtns">
            <div class="min"><svg width="20" height="18" viewBox="0 0 20 18"><path d="M0 11h20v6H0z"/></svg></div>
            <div class="max"><svg width="21" height="17" viewBox="0 0 21 17"><path d="M2.500 2.500h16v12h-16z" fill="none" stroke="#000" stroke-width="4"/></svg></div>
            <div class="cls"><svg width="18" height="16" viewBox="0 0 18 16"><path d="M0 0h6l3 4.600L12 0h6l-5.600 8L18 16h-6l-3-4.600L6 16H0l5.600-8z"/></svg></div>
          </div>
        </header>
        <main class="body">
          <div class="bars">
            <div class="menu">${label("File", 37, 24)}</div>
            <div class="bar file"><i class="grip"></i>${icon("page", 28, 31)}</div>
            <div class="bar"><i class="grip"></i>${icon("zoomIn", 31, 32)}</div>
          </div>
          <div class="middle">
            <section class="toc">
              <div class="head">${label("Table Of Contents", 250, 29)}</div>
              <div class="tools"><span class="on">${icon("toc", 36, 33)}</span><span class="next">${icon("gdb", 28, 26)}</span></div>
              <div class="list">${icon("layers", 34, 26)}</div>
            </section>
            <section class="canvas"><div class="paper"></div><div class="scroll"></div></section>
            ${this.catalog()}
            <div class="side"><nav class="tabs">
              <div class="vtab a">${icon("tabCatalog", 32, 31)}<span class="v">${label("Catalog", 85, 22.500, true)}</span></div>
              <div class="vtab b">${icon("tabSearch", 32, 31)}<span class="v">${label("Search", 76, 22.500, true)}</span></div>
            </nav></div>
          </div>
          <footer class="status">${label("619.955  901.345 Unknown Units", 336, 24)}<span class="grow"></span>
            <svg width="17" height="17" viewBox="0 0 17 17"><path d="M13 0h3v3h-3zM13 6h3v3h-3zM7 6h3v3H7zM13 12h3v3h-3zM7 12h3v3H7zM1 12h3v3H1z" fill="#bab8bc"/></svg>
          </footer>
        </main>
      </div>
      ${this.dialog()}
    `;
  }
}
